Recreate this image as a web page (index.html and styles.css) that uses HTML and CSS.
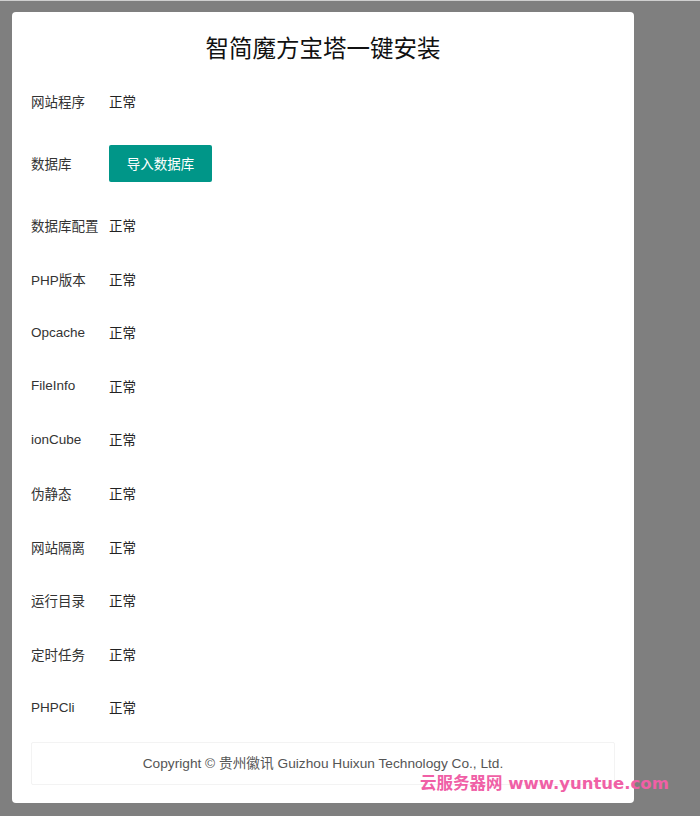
FILE: index.html
```html
<!DOCTYPE html>
<html lang="zh-CN">
<head>
    <meta charset="UTF-8">
    <meta name="viewport" content="width=device-width, initial-scale=1.0">
    <title>智简魔方宝塔一键安装</title>
    <link rel="stylesheet" href="styles.css">
</head>
<body>

    <div class="panel">
        <h1 class="title">智简魔方宝塔一键安装</h1>

        <div class="row wide">
            <div class="label">网站程序</div>
            <div class="value">正常</div>
        </div>
        <div class="row wide">
            <div class="label">数据库</div>
            <div class="value"><button class="btn">导入数据库</button></div>
        </div>
        <div class="row">
            <div class="label">数据库配置</div>
            <div class="value">正常</div>
        </div>
        <div class="row">
            <div class="label">PHP版本</div>
            <div class="value">正常</div>
        </div>
        <div class="row">
            <div class="label">Opcache</div>
            <div class="value">正常</div>
        </div>
        <div class="row">
            <div class="label">FileInfo</div>
            <div class="value">正常</div>
        </div>
        <div class="row">
            <div class="label">ionCube</div>
            <div class="value">正常</div>
        </div>
        <div class="row">
            <div class="label">伪静态</div>
            <div class="value">正常</div>
        </div>
        <div class="row">
            <div class="label">网站隔离</div>
            <div class="value">正常</div>
        </div>
        <div class="row">
            <div class="label">运行目录</div>
            <div class="value">正常</div>
        </div>
        <div class="row">
            <div class="label">定时任务</div>
            <div class="value">正常</div>
        </div>
        <div class="row">
            <div class="label">PHPCli</div>
            <div class="value">正常</div>
        </div>

        <div class="footer">Copyright © 贵州徽讯 Guizhou Huixun Technology Co., Ltd.</div>
    </div>

    <div class="watermark">云服务器网 www.yuntue.com</div>

</body>
</html>
```

FILE: styles.css
```css
body {
    margin: 0;
    height: 816px;
    background-color: #7f7f7f;
    border-top: 1px solid #cfcfcf;
    box-sizing: border-box;
    padding: 11px 0 0 12px;
    font-family: "Liberation Sans", "Noto Sans CJK SC", sans-serif;
    color: #222;
    position: relative;
}

.panel {
    width: 622px;
    height: 791px;
    box-sizing: border-box;
    background-color: #fff;
    border-radius: 4px;
    padding: 0 19px;
}

.title {
    margin: 0;
    padding-top: 20px;
    height: 70px;
    box-sizing: border-box;
    text-align: center;
    font-family: "Noto Sans CJK SC", sans-serif;
    font-size: 23.5px;
    font-weight: normal;
    line-height: 30px;
    color: #111;
}

.row {
    display: flex;
    align-items: center;
    height: 38px;
    margin-bottom: 15.6px;
    font-size: 13.5px;
}

.row.wide {
    margin-bottom: 24px;
}

.label {
    width: 78px;
    flex-shrink: 0;
    color: #333;
}

.value {
    font-family: "Noto Sans CJK SC", sans-serif;
}

.btn {
    height: 37px;
    width: 103px;
    padding: 0;
    border: none;
    border-radius: 2px;
    background-color: #009688;
    color: #fff;
    font-family: "Noto Sans CJK SC", sans-serif;
    font-size: 13.5px;
    cursor: pointer;
}

.footer {
    margin-top: 13px;
    height: 43px;
    box-sizing: border-box;
    border: 1px solid #f3f3f3;
    border-radius: 2px;
    text-align: center;
    line-height: 41px;
    font-size: 13.7px;
    color: #555;
}

.watermark {
    position: absolute;
    left: 420px;
    top: 769px;
    font-family: "DejaVu Sans", "Noto Sans CJK SC", sans-serif;
    font-size: 16.5px;
    font-weight: bold;
    color: #f060a6;
}
```
